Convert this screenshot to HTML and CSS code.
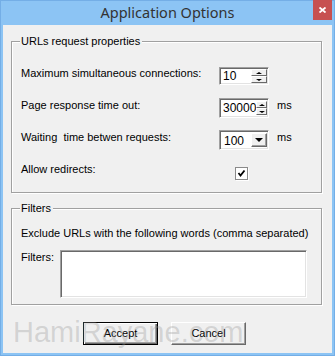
FILE: index.html
```html
<!DOCTYPE html>
<html>
<head>
<meta charset="utf-8">
<link rel="stylesheet" href="styles.css">
</head>
<body>
<div class="window">
  <div class="titlebar">
    <span class="title">Application Options</span>
    <div class="close"><svg width="7" height="6" viewBox="0 0 7 6"><path d="M0.5 0.5 L6.5 5.5 M6.5 0.5 L0.5 5.5" stroke="#fff" stroke-width="1.8" fill="none"/></svg></div>
  </div>
  <div class="client">
    <div class="group g1">
      <span class="legend">URLs request properties</span>
      <div class="row r1">
        <span class="lbl">Maximum simultaneous connections:</span>
        <div class="field spin"><span class="val">10</span><div class="spinbtns"><span class="sb"><i class="up"></i></span><span class="sb"><i class="down"></i></span></div></div>
      </div>
      <div class="row r2">
        <span class="lbl">Page response time out:</span>
        <div class="field spin"><span class="val">30000</span><div class="spinbtns"><span class="sb"><i class="up"></i></span><span class="sb"><i class="down"></i></span></div></div>
        <span class="unit">ms</span>
      </div>
      <div class="row r3">
        <span class="lbl">Waiting&nbsp; time betwen requests:</span>
        <div class="field combo"><span class="val">100</span><span class="dropbtn"><i class="drop"></i></span></div>
        <span class="unit">ms</span>
      </div>
      <div class="row r4">
        <span class="lbl">Allow redirects:</span>
        <span class="check"><svg width="9" height="9" viewBox="0 0 9 9"><path d="M1.5 4 L3.5 6.5 L7.5 1.5" stroke="#000" stroke-width="1.8" fill="none"/></svg></span>
      </div>
    </div>
    <div class="group g2">
      <span class="legend">Filters</span>
      <p class="desc">Exclude URLs with the following words (comma separated)</p>
      <div class="filterrow">
        <span class="flbl">Filters:</span>
        <div class="textarea"></div>
      </div>
    </div>
    <div class="buttons">
      <div class="btn default"><span>Accept</span></div>
      <div class="btn"><span>Cancel</span></div>
    </div>
  </div>
  <div class="watermark">HamiRayane.com</div>
</div>
</body>
</html>
```
FILE: styles.css
```css
* { box-sizing: border-box; }
html, body { margin: 0; padding: 0; }
body { width: 335px; height: 356px; overflow: hidden; font-family: "Liberation Sans", Arial, sans-serif; font-size: 11px; color: #000; }

.window {
  position: relative;
  width: 335px; height: 356px;
  background: #8cc4f4;
  border: 1px solid #74aee6;
  display: flex; flex-direction: column;
}
.titlebar {
  height: 24px;
  display: flex; align-items: center; justify-content: center;
}
.title {
  font-family: "Noto Sans", "Open Sans", sans-serif;
  font-size: 14.5px;
  color: #333;
  margin-top: -2px;
}
.close {
  position: absolute; top: -1px; right: 2px;
  width: 19px; height: 20px;
  background: #c75050;
  display: flex; align-items: center; justify-content: center;
}
.client {
  margin: 0 2px 2px 2px;
  flex: 1;
  background: #f0f0f0;
  padding: 16px 0 0 8px;
}
.group {
  position: relative;
  width: 311px;
  border: 1px solid #a0a0a0;
  box-shadow: inset 1px 1px 0 #fff, 1px 1px 0 #fff;
}
.legend {
  position: absolute; top: -7px; left: 8px;
  background: #f0f0f0;
  padding: 0 2px 0 1px;
  line-height: 13px;
}
.g1 { height: 152px; padding: 25px 0 0 9px; }
.g2 { height: 97px; margin-top: 15px; padding: 18px 0 0 9px; }

.row { display: flex; align-items: flex-start; height: 20px; }
.r2 { margin-top: 11px; }
.r3 { margin-top: 12px; }
.r4 { margin-top: 13px; }
.lbl { width: 198px; line-height: 13px; }
.r2 .lbl, .r3 .lbl { padding-top: 1px; }
.r4 .lbl { padding-top: 0; }
.unit { margin-left: 8px; line-height: 13px; padding-top: 1px; }

.field {
  width: 50px; height: 20px;
  background: #fff;
  border-top: 1px solid #a0a0a0; border-left: 1px solid #a0a0a0;
  border-bottom: 1px solid #fff; border-right: 1px solid #fff;
  box-shadow: inset 1px 1px 0 #696969, inset -1px -1px 0 #e3e3e3;
  display: flex; align-items: stretch;
  padding: 2px 1px 2px 2px;
}
.r1 .field { height: 18px; padding: 1px 1px 1px 2px; }
.val { flex: 1; font-size: 12px; line-height: 15px; padding-left: 1px; }
.r1 .val { line-height: 14px; }
.spinbtns { width: 16px; display: flex; flex-direction: column; }
.sb {
  flex: 1;
  background: #f0f0f0;
  border-top: 1px solid #fff; border-left: 1px solid #fff;
  border-right: 1px solid #696969; border-bottom: 1px solid #696969;
  display: flex; align-items: center; justify-content: center;
}
.up { width: 0; height: 0; border-left: 3px solid transparent; border-right: 3px solid transparent; border-bottom: 2px solid #000; }
.down { width: 0; height: 0; border-left: 3px solid transparent; border-right: 3px solid transparent; border-top: 2px solid #000; }
.combo .val { line-height: 16px; padding-left: 2px; }
.dropbtn {
  width: 16px;
  background: #f0f0f0;
  border-top: 1px solid #fff; border-left: 1px solid #fff;
  border-right: 1px solid #696969; border-bottom: 1px solid #696969;
  box-shadow: inset -1px -1px 0 #a0a0a0;
  display: flex; align-items: center; justify-content: center;
}
.drop { width: 0; height: 0; border-left: 4px solid transparent; border-right: 4px solid transparent; border-top: 4px solid #000; }

.check {
  margin-left: 16px; margin-top: 4px;
  width: 13px; height: 13px;
  background: #fff;
  border: 1px solid #8a8a8a;
  box-shadow: 1px 1px 0 #fff;
  display: flex; align-items: center; justify-content: center;
}

.desc { margin: 0; line-height: 13px; }
.filterrow { display: flex; align-items: flex-start; margin-top: 10px; }
.flbl { width: 39px; line-height: 13px; padding-top: 1px; }
.textarea {
  width: 247px; height: 48px;
  background: #fff;
  border-top: 1px solid #a0a0a0; border-left: 1px solid #a0a0a0;
  border-bottom: 1px solid #fff; border-right: 1px solid #fff;
  box-shadow: inset 1px 1px 0 #696969, inset -1px -1px 0 #e3e3e3;
}

.buttons { display: flex; gap: 13px; margin-top: 17px; padding-left: 72px; }
.btn {
  width: 75px; height: 23px;
  background: #f0f0f0;
  border-top: 1px solid #fff; border-left: 1px solid #fff;
  border-right: 1px solid #696969; border-bottom: 1px solid #696969;
  box-shadow: inset -1px -1px 0 #a0a0a0;
  display: flex; align-items: center; justify-content: center;
  line-height: 13px;
}
.btn.default {
  border: 1px solid #000;
  box-shadow: inset 1px 1px 0 #fff, inset -1px -1px 0 #696969, inset -2px -2px 0 #a0a0a0;
}

.watermark {
  position: absolute; left: 12px; top: 317px;
  font-size: 29px; line-height: 29px;
  color: rgba(150,150,150,0.32);
  pointer-events: none;
  white-space: nowrap;
}
```
